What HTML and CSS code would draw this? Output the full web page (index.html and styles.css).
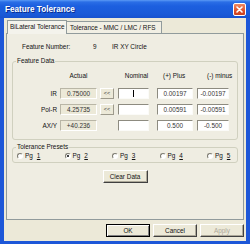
FILE: index.html
```html
<!DOCTYPE html>
<html lang="en">
<head>
  <meta charset="UTF-8" />
  <title>Feature Tolerance</title>
  <link rel="stylesheet" href="styles.css">
</head>
<body>

  <div class="window">
    <div class="titlebar">
      <span class="title">Feature Tolerance</span>
      <span class="close">
        <svg width="7" height="7" viewBox="0 0 7 7"><path d="M1 1L6 6M6 1L1 6" stroke="#fff" stroke-width="1.6" stroke-linecap="round"/></svg>
      </span>
    </div>

    <div class="client">
      <div class="tabs">
        <div class="tab active">BiLateral Tolerance</div>
        <div class="tab">Tolerance - MMC / LMC / RFS</div>
      </div>

      <div class="page">
        <div class="feature-line">
          <span class="fn-label">Feature Number:</span>
          <span class="fn-num">9</span>
          <span>IR XY Circle</span>
        </div>

        <fieldset class="group">
          <legend>Feature Data</legend>
          <div class="data-grid">
            <span></span>
            <span class="hd">Actual</span>
            <span></span>
            <span class="hd">Nominal</span>
            <span class="hd plus">(+) Plus</span>
            <span class="hd minus">(-) minus</span>

            <span class="row-label">IR</span>
            <div class="field actual">0.75000</div>
            <div class="small-btn">&lt;&lt;</div>
            <div class="field nominal"><span class="caret"></span></div>
            <div class="field plus-f">0.00197</div>
            <div class="field minus-f">-0.00197</div>

            <span class="row-label">Pol-R</span>
            <div class="field actual">4.25735</div>
            <div class="small-btn">&lt;&lt;</div>
            <div class="field nominal"></div>
            <div class="field plus-f">0.00591</div>
            <div class="field minus-f">-0.00591</div>

            <span class="row-label">AX/Y</span>
            <div class="field actual">+40.236</div>
            <span></span>
            <div class="field nominal"></div>
            <div class="field plus-f">0.500</div>
            <div class="field minus-f">-0.500</div>
          </div>
        </fieldset>

        <fieldset class="group presets">
          <legend>Tolerance Presets</legend>
          <div class="radio-row">
            <label class="radio"><span class="dot"></span>Pg <u>1</u></label>
            <label class="radio"><span class="dot on"></span>Pg <u>2</u></label>
            <label class="radio"><span class="dot"></span>Pg <u>3</u></label>
            <label class="radio"><span class="dot"></span>Pg <u>4</u></label>
            <label class="radio"><span class="dot"></span>Pg <u>5</u></label>
          </div>
        </fieldset>

        <div class="btn clear">Clear Data</div>
      </div>

      <div class="actions">
        <div class="btn default">OK</div>
        <div class="btn">Cancel</div>
        <div class="btn disabled">Apply</div>
      </div>
    </div>
  </div>

</body>
</html>
```

FILE: styles.css
```css
body {
  margin: 0;
  font-family: "Liberation Sans", Arial, sans-serif;
  font-size: 6.4px;
  color: #111;
}
.window {
  width: 250px;
  height: 244px;
  background: #1d57d8;
  display: flex;
  flex-direction: column;
  overflow: hidden;
}
.titlebar {
  height: 18px;
  display: flex;
  align-items: center;
  justify-content: space-between;
  padding: 0 4px 0 5px;
  background: linear-gradient(to bottom, #5b9af5 0, #2a6ee6 2px, #1c5fdf 6px, #1a5ad8 14px, #1752cf 18px);
}
.title {
  color: white;
  font-weight: bold;
  font-size: 8.2px;
  text-shadow: 1px 1px #0a2a8a;
}
.close {
  width: 13px;
  height: 13px;
  box-sizing: border-box;
  border: 1px solid #fff;
  border-radius: 2px;
  background: linear-gradient(to bottom, #f08a62, #e0522c 60%, #c8401e);
  display: flex;
  align-items: center;
  justify-content: center;
}
.client {
  flex: 1;
  margin: 0 4px 3px;
  background: #ece9d8;
  display: flex;
  flex-direction: column;
}
.tabs {
  display: flex;
  margin: 2px 0 0 3px;
  height: 13px;
}
.tab {
  box-sizing: border-box;
  width: 95px;
  height: 12px;
  margin-top: 1px;
  padding-left: 3px;
  line-height: 11px;
  border: 1px solid #919b9c;
  border-bottom: none;
  border-left: none;
  background: #f1efe4;
}
.tab.active {
  position: relative;
  width: 60px;
  height: 14px;
  margin-top: 0;
  padding-left: 2px;
  border-left: 1px solid #919b9c;
  background: #f4f3ec;
}
.page {
  margin-left: 2px;
  width: 238px;
  height: 187px;
  box-sizing: border-box;
  border: 1px solid #919b9c;
  background: #efede2;
  padding-top: 9px;
  display: flex;
  flex-direction: column;
}
.feature-line {
  display: flex;
  line-height: 8px;
  padding-left: 15px;
}
.fn-label {
  width: 71px;
}
.fn-num {
  width: 19px;
}
.group {
  margin: 6px 5px 0;
  padding: 0;
  border: 1px solid #d0d0bf;
  border-radius: 3px;
  min-width: 0;
}
.group legend {
  margin-left: 3px;
  padding: 0 1px;
  line-height: 8px;
}
.data-grid {
  display: grid;
  grid-template-columns: 46px 40px 18px 39px 40px 32px;
  grid-template-rows: repeat(4, 11px);
  row-gap: 5px;
  padding: 7px 0 8px 1px;
}
.hd {
  line-height: 8px;
  text-align: center;
  width: 37px;
}
.hd.plus {
  text-align: left;
  padding-left: 6px;
}
.hd.minus {
  text-align: left;
  padding-left: 10px;
}
.row-label {
  text-align: right;
  padding-right: 3px;
  line-height: 11px;
}
.field {
  box-sizing: border-box;
  height: 11px;
  line-height: 9px;
  text-align: center;
  border: 1px solid;
  border-color: #8d8b80 #fbfbf8 #fbfbf8 #8d8b80;
  background: #fff;
  color: #333;
}
.field.actual {
  width: 37px;
  background: #ece9d8;
  border-color: #b9b6a6 #fff #fff #b9b6a6;
}
.field.nominal {
  width: 31px;
  display: flex;
  justify-content: center;
  align-items: center;
}
.field.plus-f {
  width: 36px;
}
.field.minus-f {
  width: 32px;
}
.caret {
  width: 1px;
  height: 7px;
  background: #000;
}
.small-btn {
  box-sizing: border-box;
  width: 14px;
  height: 11px;
  line-height: 9px;
  text-align: center;
  font-size: 5.5px;
  border: 1px solid;
  border-color: #fff #9d9a8c #9d9a8c #fff;
  background: #ece9d8;
  color: #333;
}
.presets {
  margin-top: 3px;
}
.radio-row {
  display: grid;
  grid-template-columns: repeat(5, 47.5px);
  padding: 1px 0 2px 4px;
  line-height: 8px;
}
.radio {
  display: flex;
  align-items: center;
  gap: 2px;
}
.radio u {
  margin-left: 2px;
}
.dot {
  width: 6px;
  height: 6px;
  box-sizing: border-box;
  border-radius: 50%;
  border: 1px solid;
  border-color: #7c7a70 #fff #fff #7c7a70;
  background: #fff;
  display: flex;
  align-items: center;
  justify-content: center;
}
.dot.on::after {
  content: "";
  width: 2px;
  height: 2px;
  border-radius: 50%;
  background: #000;
}
.btn {
  box-sizing: border-box;
  width: 44px;
  height: 13px;
  line-height: 11px;
  text-align: center;
  border: 1px solid;
  border-color: #fff #404040 #404040 #fff;
  box-shadow: inset -1px -1px #aca899;
  background: #ece9d8;
}
.btn.clear {
  width: 45px;
  margin: 7px auto 0;
}
.btn.default {
  border-color: #000;
  box-shadow: inset 1px 1px #fff, inset -1px -1px #808080;
}
.btn.disabled {
  color: #aca899;
}
.actions {
  display: flex;
  justify-content: flex-end;
  gap: 3px;
  margin-top: 4px;
  padding-right: 2px;
}
```
